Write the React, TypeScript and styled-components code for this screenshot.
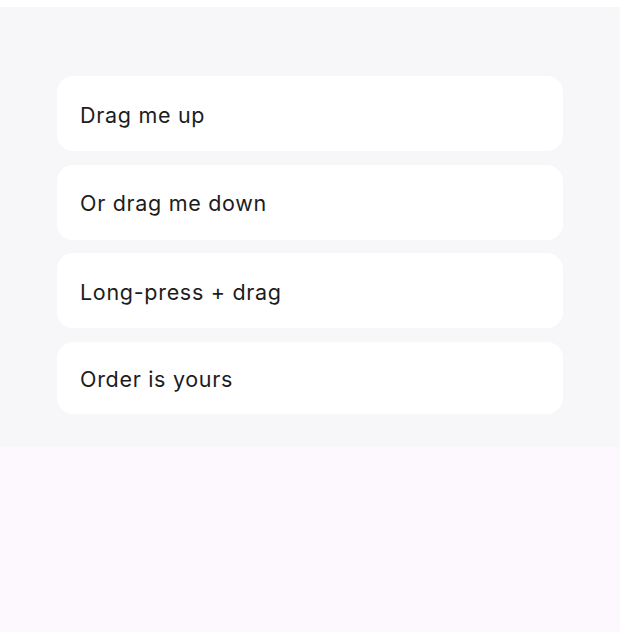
import React from "react";
import styled, { createGlobalStyle } from "styled-components";

const Global = createGlobalStyle`
  html, body { margin: 0; padding: 0; background: #ffffff; }
  body { font-family: Inter, "Noto Sans", sans-serif; }
`;

const Page = styled.div`
  display: flex;
  flex-direction: column;
  min-height: 632px;
  padding-top: 7px;
  box-sizing: border-box;
`;

const Stage = styled.section`
  background: #f7f7f9;
  height: 440px;
  box-sizing: border-box;
  padding: 69px 57px 0;
`;

const List = styled.ul`
  list-style: none;
  margin: 0;
  padding: 0;
  display: flex;
  flex-direction: column;
  gap: 13.67px;
  height: 338px;
  overflow: hidden;
`;

const Card = styled.li<{ $h?: number }>`
  flex: 0 0 ${(p) => p.$h ?? 75}px;
  background: #ffffff;
  border-radius: 16px;
  display: flex;
  align-items: center;
  padding: 0 23px;
  font-size: 21.5px;
  letter-spacing: 0.7px;
  color: #1c1c1e;
  padding-top: 2px;
  box-sizing: border-box;
`;

const Footer = styled.div`
  flex: 1;
  background: #fdf8fd;
`;

const items = ["Drag me up", "Or drag me down", "Long-press + drag", "Order is yours"];

export default function App() {
  return (
    <>
      <Global />
      <Page>
        <Stage>
          <List>
            {items.map((t, i) => (
              <Card key={t} $h={i === 3 ? 72 : 75}>
                {t}
              </Card>
            ))}
          </List>
        </Stage>
        <Footer />
      </Page>
    </>
  );
}
